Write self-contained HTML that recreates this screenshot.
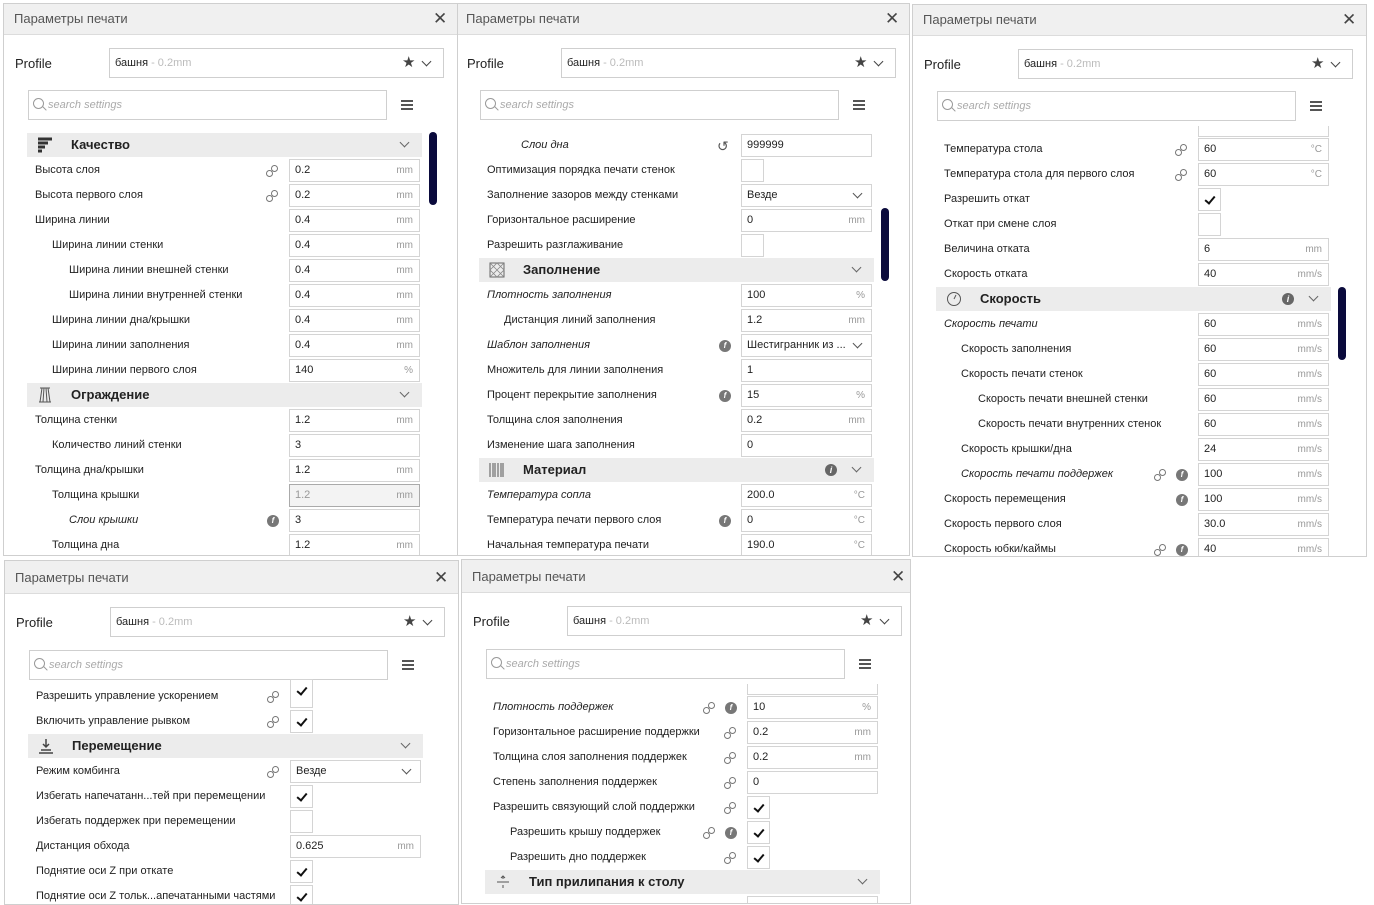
<!DOCTYPE html>
<html><head><meta charset="utf-8"><style>
*{box-sizing:border-box;margin:0;padding:0}
body{width:1374px;height:900px;background:#fff;position:relative;overflow:hidden;font-family:"Liberation Sans","DejaVu Sans",sans-serif;color:#222}
.p{position:absolute;background:#fff;border:1px solid #cfcfcf;overflow:hidden}
.h{position:absolute;left:0;top:0;right:0;height:31px;background:#f0f0f0;border-bottom:1px solid #dcdcdc;font-size:13px;color:#555;line-height:30px;padding-left:10px}
.h .x{position:absolute;left:429px;top:0;font-size:17px;font-weight:bold;color:#444}
.pl{position:absolute;left:11px;font-size:13px;color:#222}
.pb{position:absolute;left:105px;width:335px;height:30px;border:1px solid #cfcfcf;font-size:11px;line-height:28px;padding-left:5px}
.pb span{color:#bbb}
.pb .st{position:absolute;left:292px;top:0;color:#444;font-size:15px;font-style:normal}
.pb .cv{position:absolute;left:313px;top:9px;width:7px;height:7px;border-right:1.5px solid #444;border-bottom:1.5px solid #444;transform:rotate(45deg)}
.sb{position:absolute;left:24px;width:359px;height:30px;border:1px solid #cfcfcf;font-size:11px;font-style:italic;color:#aaa;line-height:28px;padding-left:19px}
.sb:before{content:"";position:absolute;left:4px;top:7px;width:9px;height:9px;border:1.3px solid #999;border-radius:50%}
.sb:after{content:"";position:absolute;left:13px;top:17px;width:5px;height:1.3px;background:#999;transform:rotate(45deg)}
.hm{position:absolute;left:397px;width:12px;height:10px;border-top:2px solid #555;border-bottom:2px solid #555}
.hm:after{content:"";position:absolute;left:0;top:2px;width:12px;height:2px;background:#555}
.sc{position:absolute;left:425px;width:8px;height:73px;background:#0a0a3c;border-radius:4px}
.r{position:absolute;left:0;width:420px;height:25px;margin-top:1px}
.l{position:absolute;left:31px;top:0;line-height:25px;font-size:11px;color:#222;white-space:nowrap}
.l.a{left:48px}.l.b{left:65px}.l.i{font-style:italic}
.f{position:absolute;left:285px;top:1px;width:131px;height:23px;border:1px solid #d4d4d4;font-size:11px;line-height:21px;padding-left:5px;background:#fff}
.f b{position:absolute;right:6px;top:0;font-weight:normal;color:#999;font-size:10px}
.f.d{background:#f3f3f3;border-color:#aaa;color:#999}
.f .cv{position:absolute;right:10px;top:5px;width:7px;height:7px;border-right:1.5px solid #555;border-bottom:1.5px solid #555;transform:rotate(45deg)}
.c{position:absolute;left:285px;top:1px;width:23px;height:23px;border:1px solid #d4d4d4;background:#fff}
.c.k:after{content:"";position:absolute;left:8px;top:5px;width:4px;height:8px;border-right:2px solid #111;border-bottom:2px solid #111;transform:rotate(40deg)}
.lk{position:absolute;left:262px;top:7px;width:12px;height:12px}
.lk.z{left:241px}
.lk:before,.lk:after{content:"";position:absolute;width:5px;height:5px;border:1.3px solid #777;border-radius:50%}
.lk:before{left:0;top:5px}.lk:after{left:5px;top:0}
.fi{position:absolute;left:263px;top:7px;width:12px;height:12px;border-radius:50%;background:#777;color:#fff;font-size:8px;font-style:italic;font-weight:bold;text-align:center;line-height:12px}
.rs{position:absolute;left:261px;top:5px;font-size:14px;color:#555}
.cat{position:absolute;left:23px;width:395px;height:24px;background:#ececec;top:0}
.cat .t{position:absolute;left:44px;top:0;line-height:24px;font-size:13px;font-weight:bold;color:#222}
.cat .ic{position:absolute;left:10px;top:4px}
.cat .cv{position:absolute;left:374px;top:6px;width:7px;height:7px;border-right:1.5px solid #666;border-bottom:1.5px solid #666;transform:rotate(45deg)}
.cat .in{position:absolute;left:346px;top:6px;width:12px;height:12px;border-radius:50%;background:#666;color:#fff;font-size:9px;font-weight:bold;text-align:center;line-height:12px}
</style></head><body>

<!-- Panel 2 -->
<div class="p" style="left:455px;top:3px;width:455px;height:553px">
<div class="h">Параметры печати<span class="x">✕</span></div>
<div class="pl" style="top:52px">Profile</div>
<div class="pb" style="top:44px">башня <span>- 0.2mm</span><i class="st">★</i><i class="cv"></i></div>
<div class="sb" style="top:86px">search settings</div><div class="hm" style="top:96px"></div>
<div class="sc" style="top:204px"></div>
<div class="r" style="top:128px"><span class="l b i">Слои дна</span><span class="rs">↺</span><div class="f">999999</div></div>
<div class="r" style="top:153px"><span class="l">Оптимизация порядка печати стенок</span><div class="c"></div></div>
<div class="r" style="top:178px"><span class="l">Заполнение зазоров между стенками</span><div class="f">Везде<i class="cv"></i></div></div>
<div class="r" style="top:203px"><span class="l">Горизонтальное расширение</span><div class="f">0<b>mm</b></div></div>
<div class="r" style="top:228px"><span class="l">Разрешить разглаживание</span><div class="c"></div></div>
<div class="r" style="top:253px"><div class="cat"><svg class="ic" width="16" height="16"><rect x="1" y="1" width="14" height="14" fill="none" stroke="#666"/><path d="M1 8L8 1L15 8L8 15Z M1 1L15 15 M15 1L1 15" fill="none" stroke="#888" stroke-width=".8"/></svg><span class="t">Заполнение</span><i class="cv"></i></div></div>
<div class="r" style="top:278px"><span class="l i">Плотность заполнения</span><div class="f">100<b>%</b></div></div>
<div class="r" style="top:303px"><span class="l a">Дистанция линий заполнения</span><div class="f">1.2<b>mm</b></div></div>
<div class="r" style="top:328px"><span class="l i">Шаблон заполнения</span><i class="fi">f</i><div class="f">Шестигранник из ...<i class="cv"></i></div></div>
<div class="r" style="top:353px"><span class="l">Множитель для линии заполнения</span><div class="f">1</div></div>
<div class="r" style="top:378px"><span class="l">Процент перекрытие заполнения</span><i class="fi">f</i><div class="f">15<b>%</b></div></div>
<div class="r" style="top:403px"><span class="l">Толщина слоя заполнения</span><div class="f">0.2<b>mm</b></div></div>
<div class="r" style="top:428px"><span class="l">Изменение шага заполнения</span><div class="f">0</div></div>
<div class="r" style="top:453px"><div class="cat"><svg class="ic" width="16" height="16"><path d="M1 1V15M4 1V15M6 1V15M9 1V15M12 1V15M14 1V15" stroke="#555" stroke-width="1"/></svg><span class="t">Материал</span><i class="in">i</i><i class="cv"></i></div></div>
<div class="r" style="top:478px"><span class="l i">Температура сопла</span><div class="f">200.0<b>°C</b></div></div>
<div class="r" style="top:503px"><span class="l">Температура печати первого слоя</span><i class="fi">f</i><div class="f">0<b>°C</b></div></div>
<div class="r" style="top:528px"><span class="l">Начальная температура печати</span><div class="f">190.0<b>°C</b></div></div>
</div>

<!-- Panel 1 -->
<div class="p" style="left:3px;top:3px;width:455px;height:553px">
<div class="h">Параметры печати<span class="x">✕</span></div>
<div class="pl" style="top:52px">Profile</div>
<div class="pb" style="top:44px">башня <span>- 0.2mm</span><i class="st">★</i><i class="cv"></i></div>
<div class="sb" style="top:86px">search settings</div><div class="hm" style="top:96px"></div>
<div class="sc" style="top:128px"></div>
<div class="r" style="top:128px"><div class="cat"><svg class="ic" width="16" height="16"><path d="M1 2H15M1 6H11M1 10H8M1 14H5" stroke="#333" stroke-width="3"/></svg><span class="t">Качество</span><i class="cv"></i></div></div>
<div class="r" style="top:153px"><span class="l">Высота слоя</span><i class="lk"></i><div class="f">0.2<b>mm</b></div></div>
<div class="r" style="top:178px"><span class="l">Высота первого слоя</span><i class="lk"></i><div class="f">0.2<b>mm</b></div></div>
<div class="r" style="top:203px"><span class="l">Ширина линии</span><div class="f">0.4<b>mm</b></div></div>
<div class="r" style="top:228px"><span class="l a">Ширина линии стенки</span><div class="f">0.4<b>mm</b></div></div>
<div class="r" style="top:253px"><span class="l b">Ширина линии внешней стенки</span><div class="f">0.4<b>mm</b></div></div>
<div class="r" style="top:278px"><span class="l b">Ширина линии внутренней стенки</span><div class="f">0.4<b>mm</b></div></div>
<div class="r" style="top:303px"><span class="l a">Ширина линии дна/крышки</span><div class="f">0.4<b>mm</b></div></div>
<div class="r" style="top:328px"><span class="l a">Ширина линии заполнения</span><div class="f">0.4<b>mm</b></div></div>
<div class="r" style="top:353px"><span class="l a">Ширина линии первого слоя</span><div class="f">140<b>%</b></div></div>
<div class="r" style="top:378px"><div class="cat"><svg class="ic" width="16" height="16"><path d="M3 1H13M2 15H14M5 1L3 15M11 1L13 15M7 1L6 15M9 1L10 15" fill="none" stroke="#555" stroke-width="1"/></svg><span class="t">Ограждение</span><i class="cv"></i></div></div>
<div class="r" style="top:403px"><span class="l">Толщина стенки</span><div class="f">1.2<b>mm</b></div></div>
<div class="r" style="top:428px"><span class="l a">Количество линий стенки</span><div class="f">3</div></div>
<div class="r" style="top:453px"><span class="l">Толщина дна/крышки</span><div class="f">1.2<b>mm</b></div></div>
<div class="r" style="top:478px"><span class="l a">Толщина крышки</span><div class="f d">1.2<b>mm</b></div></div>
<div class="r" style="top:503px"><span class="l b i">Слои крышки</span><i class="fi">f</i><div class="f">3</div></div>
<div class="r" style="top:528px"><span class="l a">Толщина дна</span><div class="f">1.2<b>mm</b></div></div>
</div>

<!-- Panel 3 -->
<div class="p" style="left:912px;top:4px;width:455px;height:553px">
<div class="h">Параметры печати<span class="x">✕</span></div>
<div class="pl" style="top:52px">Profile</div>
<div class="pb" style="top:44px">башня <span>- 0.2mm</span><i class="st">★</i><i class="cv"></i></div>
<div class="sb" style="top:86px">search settings</div><div class="hm" style="top:96px"></div>
<div class="sc" style="top:282px"></div>
<div class="r" style="top:106px"><div class="f" style="top:14px;height:11px;border-top:none"></div></div>
<div class="r" style="top:131px"><span class="l">Температура стола</span><i class="lk"></i><div class="f">60<b>°C</b></div></div>
<div class="r" style="top:156px"><span class="l">Температура стола для первого слоя</span><i class="lk"></i><div class="f">60<b>°C</b></div></div>
<div class="r" style="top:181px"><span class="l">Разрешить откат</span><div class="c k"></div></div>
<div class="r" style="top:206px"><span class="l">Откат при смене слоя</span><div class="c"></div></div>
<div class="r" style="top:231px"><span class="l">Величина отката</span><div class="f">6<b>mm</b></div></div>
<div class="r" style="top:256px"><span class="l">Скорость отката</span><div class="f">40<b>mm/s</b></div></div>
<div class="r" style="top:281px"><div class="cat"><svg class="ic" width="16" height="16"><circle cx="8" cy="8" r="6.5" fill="none" stroke="#555"/><path d="M8 8L10 4" stroke="#555"/></svg><span class="t">Скорость</span><i class="in">i</i><i class="cv"></i></div></div>
<div class="r" style="top:306px"><span class="l i">Скорость печати</span><div class="f">60<b>mm/s</b></div></div>
<div class="r" style="top:331px"><span class="l a">Скорость заполнения</span><div class="f">60<b>mm/s</b></div></div>
<div class="r" style="top:356px"><span class="l a">Скорость печати стенок</span><div class="f">60<b>mm/s</b></div></div>
<div class="r" style="top:381px"><span class="l b">Скорость печати внешней стенки</span><div class="f">60<b>mm/s</b></div></div>
<div class="r" style="top:406px"><span class="l b">Скорость печати внутренних стенок</span><div class="f">60<b>mm/s</b></div></div>
<div class="r" style="top:431px"><span class="l a">Скорость крышки/дна</span><div class="f">24<b>mm/s</b></div></div>
<div class="r" style="top:456px"><span class="l a i">Скорость печати поддержек</span><i class="lk z"></i><i class="fi">f</i><div class="f">100<b>mm/s</b></div></div>
<div class="r" style="top:481px"><span class="l">Скорость перемещения</span><i class="fi">f</i><div class="f">100<b>mm/s</b></div></div>
<div class="r" style="top:506px"><span class="l">Скорость первого слоя</span><div class="f">30.0<b>mm/s</b></div></div>
<div class="r" style="top:531px"><span class="l">Скорость юбки/каймы</span><i class="lk z"></i><i class="fi">f</i><div class="f">40<b>mm/s</b></div></div>
</div>

<!-- Panel 4 -->
<div class="p" style="left:4px;top:560px;width:455px;height:345px">
<div class="h" style="height:33px;line-height:33px">Параметры печати<span class="x">✕</span></div>
<div class="pl" style="top:54px">Profile</div>
<div class="pb" style="top:46px">башня <span>- 0.2mm</span><i class="st">★</i><i class="cv"></i></div>
<div class="sb" style="top:89px">search settings</div><div class="hm" style="top:99px"></div>
<div class="r" style="top:122px"><span class="l">Разрешить управление ускорением</span><i class="lk"></i><div class="c k" style="top:-5px;height:29px"></div></div>
<div class="r" style="top:147px"><span class="l">Включить управление рывком</span><i class="lk"></i><div class="c k"></div></div>
<div class="r" style="top:172px"><div class="cat"><svg class="ic" width="16" height="16"><path d="M8 1V9M5 6L8 9L11 6M1 15H15M3 12H13" fill="none" stroke="#444" stroke-width="1.5"/></svg><span class="t">Перемещение</span><i class="cv"></i></div></div>
<div class="r" style="top:197px"><span class="l">Режим комбинга</span><i class="lk"></i><div class="f">Везде<i class="cv"></i></div></div>
<div class="r" style="top:222px"><span class="l">Избегать напечатанн...тей при перемещении</span><div class="c k"></div></div>
<div class="r" style="top:247px"><span class="l">Избегать поддержек при перемещении</span><div class="c"></div></div>
<div class="r" style="top:272px"><span class="l">Дистанция обхода</span><div class="f">0.625<b>mm</b></div></div>
<div class="r" style="top:297px"><span class="l">Поднятие оси Z при откате</span><div class="c k"></div></div>
<div class="r" style="top:322px"><span class="l">Поднятие оси Z тольк...апечатанными частями</span><div class="c k"></div></div>
</div>

<!-- Panel 5 -->
<div class="p" style="left:461px;top:559px;width:450px;height:345px">
<div class="h" style="height:33px;line-height:33px">Параметры печати<span class="x">✕</span></div>
<div class="pl" style="top:54px">Profile</div>
<div class="pb" style="top:46px">башня <span>- 0.2mm</span><i class="st">★</i><i class="cv"></i></div>
<div class="sb" style="top:89px">search settings</div><div class="hm" style="top:99px"></div>
<div class="r" style="top:109px"><div class="f" style="top:14px;height:11px;border-top:none"></div></div>
<div class="r" style="top:134px"><span class="l i">Плотность поддержек</span><i class="lk z"></i><i class="fi">f</i><div class="f">10<b>%</b></div></div>
<div class="r" style="top:159px"><span class="l">Горизонтальное расширение поддержки</span><i class="lk"></i><div class="f">0.2<b>mm</b></div></div>
<div class="r" style="top:184px"><span class="l">Толщина слоя заполнения поддержек</span><i class="lk"></i><div class="f">0.2<b>mm</b></div></div>
<div class="r" style="top:209px"><span class="l">Степень заполнения поддержек</span><i class="lk"></i><div class="f">0</div></div>
<div class="r" style="top:234px"><span class="l">Разрешить связующий слой поддержки</span><i class="lk"></i><div class="c k"></div></div>
<div class="r" style="top:259px"><span class="l a">Разрешить крышу поддержек</span><i class="lk z"></i><i class="fi">f</i><div class="c k"></div></div>
<div class="r" style="top:284px"><span class="l a">Разрешить дно поддержек</span><i class="lk"></i><div class="c k"></div></div>
<div class="r" style="top:309px"><div class="cat"><svg class="ic" width="16" height="16"><path d="M2 8H14M8 2V5M8 11V14M6 4L8 2L10 4" fill="none" stroke="#555" stroke-width="1"/></svg><span class="t">Тип прилипания к столу</span><i class="cv"></i></div></div>
<div class="r" style="top:334px"><div class="f"></div></div>
</div>

</body></html>
